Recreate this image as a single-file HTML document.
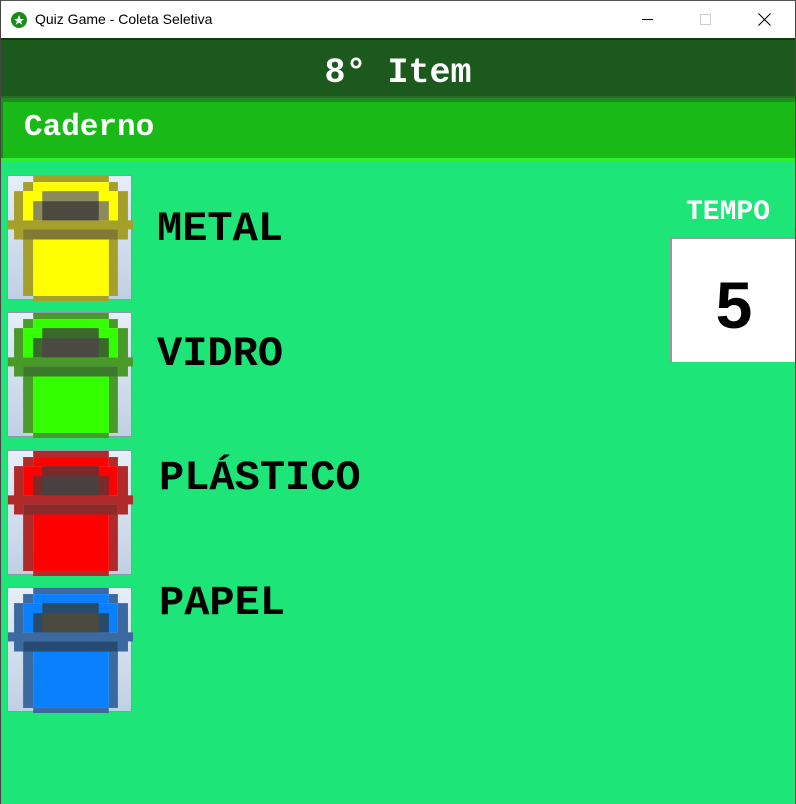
<!DOCTYPE html>
<html><head><meta charset="utf-8"><style>
*{margin:0;padding:0;box-sizing:border-box}
body{width:796px;height:804px;overflow:hidden;background:#1ee577;position:relative;font-family:"Liberation Mono","Courier New",monospace}
.tb{position:absolute;left:0;top:0;width:796px;height:38px;background:#fff;border-top:1px solid #555;}
.tb .t{position:absolute;left:35px;top:10px;font:14px "Liberation Sans",sans-serif;color:#000}
.frame{position:absolute;left:0;top:0;width:1px;height:804px;background:#444}
.frame2{position:absolute;right:0;top:0;width:1px;height:804px;background:#444}
.hd{position:absolute;left:1px;top:38px;width:794px;height:60px;background:#1c591d;border-top:2px solid #0f3a10;border-bottom:2px solid #2a6a2a}
.hd span{position:absolute;left:0;right:0;top:13px;text-align:center;color:#fff;font-weight:bold;font-size:35px;line-height:40px}
.band{position:absolute;left:1px;top:98px;width:794px;height:4px;background:#1f8a1f}
.cd{position:absolute;left:1px;top:102px;width:794px;height:58px;background:#19b918;border-left:2px solid #139013}
.cd span{position:absolute;left:21px;top:8px;color:#fff;font-weight:bold;font-size:31px;line-height:36px}
.line{position:absolute;left:1px;top:158px;width:794px;height:3px;background:#2ef02a}
.btn{position:absolute;left:7px;width:125px;height:125px;border:1px solid #8a9aa8;background:linear-gradient(#e6eef8,#c0d0e4)}
.btn svg{position:absolute;left:0;top:0}
.lbl{position:absolute;color:#000;font-weight:bold;font-size:42px;line-height:46px}
.tempo{position:absolute;left:686px;top:197px;color:#fff;font-weight:bold;font-size:28px;line-height:32px}
.box{position:absolute;left:670px;top:237px;width:126px;height:125px;background:#fff;border-left:2px solid #999;border-top:2px solid #999}
.box span{position:absolute;left:0;right:0;top:31px;text-align:center;font:bold 66px "Liberation Sans",sans-serif;color:#000;line-height:70px}
</style></head><body>
<div class="tb">
<svg style="position:absolute;left:10px;top:10px" width="18" height="18" viewBox="0 0 18 18"><circle cx="9" cy="9" r="8" fill="#1a8a1a"/><path d="M9 4 L10.5 8 L14 8 L11 10.5 L12.5 14 L9 11.5 L5.5 14 L7 10.5 L4 8 L7.5 8Z" fill="#fff"/></svg>
<span class="t">Quiz Game - Coleta Seletiva</span>
<div style="position:absolute;left:642px;top:18px;width:11px;height:1px;background:#000"></div>
<div style="position:absolute;left:700px;top:13px;width:11px;height:11px;border:1px solid #ccc"></div>
<svg style="position:absolute;left:758px;top:12px" width="13" height="13"><path d="M0.5 0.5L12.5 12.5M12.5 0.5L0.5 12.5" stroke="#000" stroke-width="1.1"/></svg>
</div>
<div class="hd"><span>8° Item</span></div>
<div class="band"></div>
<div class="cd"><span>Caderno</span></div>
<div class="line"></div>

<div class="btn" style="top:175px"><svg width="125" height="125" viewBox="0 0 124 124">
<g fill="#a5a02a"><rect x="25" y="0" width="75" height="6"/><rect x="15" y="6" width="10" height="9"/><rect x="100" y="6" width="9" height="9"/><rect x="6" y="15" width="9" height="48"/><rect x="109" y="15" width="10" height="48"/><rect x="0" y="44" width="124" height="9"/><rect x="15" y="63" width="10" height="56"/><rect x="100" y="63" width="9" height="56"/><rect x="25" y="119" width="75" height="5"/></g>
<g fill="#ffff00"><rect x="25" y="6" width="75" height="9"/><rect x="15" y="15" width="94" height="29"/><rect x="25" y="63" width="75" height="56"/></g>
<rect x="34" y="15" width="56" height="10" fill="#8a8a5a"/><rect x="25" y="25" width="75" height="19" fill="#8a8a5a"/><rect x="34" y="25" width="56" height="19" fill="#4a4a40"/><rect x="15" y="53" width="94" height="10" fill="#807a35"/>
</svg></div>
<div class="lbl" style="left:157px;top:206px">METAL</div>

<div class="btn" style="top:312px"><svg width="125" height="125" viewBox="0 0 124 124">
<g fill="#4a9a2a"><rect x="25" y="0" width="75" height="6"/><rect x="15" y="6" width="10" height="9"/><rect x="100" y="6" width="9" height="9"/><rect x="6" y="15" width="9" height="48"/><rect x="109" y="15" width="10" height="48"/><rect x="0" y="44" width="124" height="9"/><rect x="15" y="63" width="10" height="56"/><rect x="100" y="63" width="9" height="56"/><rect x="25" y="119" width="75" height="5"/></g>
<g fill="#33ff00"><rect x="25" y="6" width="75" height="9"/><rect x="15" y="15" width="94" height="29"/><rect x="25" y="63" width="75" height="56"/></g>
<rect x="34" y="15" width="56" height="10" fill="#3a6a2a"/><rect x="25" y="25" width="75" height="19" fill="#3a6a2a"/><rect x="34" y="25" width="56" height="19" fill="#4a4a40"/><rect x="15" y="53" width="94" height="10" fill="#3a7a2a"/>
</svg></div>
<div class="lbl" style="left:157px;top:331px">VIDRO</div>

<div class="btn" style="top:450px"><svg width="125" height="125" viewBox="0 0 124 124">
<g fill="#b02a2a"><rect x="25" y="0" width="75" height="6"/><rect x="15" y="6" width="10" height="9"/><rect x="100" y="6" width="9" height="9"/><rect x="6" y="15" width="9" height="48"/><rect x="109" y="15" width="10" height="48"/><rect x="0" y="44" width="124" height="9"/><rect x="15" y="63" width="10" height="56"/><rect x="100" y="63" width="9" height="56"/><rect x="25" y="119" width="75" height="5"/></g>
<g fill="#ff0000"><rect x="25" y="6" width="75" height="9"/><rect x="15" y="15" width="94" height="29"/><rect x="25" y="63" width="75" height="56"/></g>
<rect x="34" y="15" width="56" height="10" fill="#7a2a2a"/><rect x="25" y="25" width="75" height="19" fill="#7a2a2a"/><rect x="34" y="25" width="56" height="19" fill="#4a4040"/><rect x="15" y="53" width="94" height="10" fill="#8a2a2a"/>
</svg></div>
<div class="lbl" style="left:159px;top:455px">PLÁSTICO</div>

<div class="btn" style="top:587px"><svg width="125" height="125" viewBox="0 0 124 124">
<g fill="#3a6aa0"><rect x="25" y="0" width="75" height="6"/><rect x="15" y="6" width="10" height="9"/><rect x="100" y="6" width="9" height="9"/><rect x="6" y="15" width="9" height="48"/><rect x="109" y="15" width="10" height="48"/><rect x="0" y="44" width="124" height="9"/><rect x="15" y="63" width="10" height="56"/><rect x="100" y="63" width="9" height="56"/><rect x="25" y="119" width="75" height="5"/></g>
<g fill="#0a80ff"><rect x="25" y="6" width="75" height="9"/><rect x="15" y="15" width="94" height="29"/><rect x="25" y="63" width="75" height="56"/></g>
<rect x="34" y="15" width="56" height="10" fill="#2a4a6a"/><rect x="25" y="25" width="75" height="19" fill="#2a4a6a"/><rect x="34" y="25" width="56" height="19" fill="#4a4a40"/><rect x="15" y="53" width="94" height="10" fill="#264a70"/>
</svg></div>
<div class="lbl" style="left:159px;top:580px">PAPEL</div>

<div class="tempo">TEMPO</div>
<div class="box"><span>5</span></div>
<div class="frame"></div><div class="frame2"></div>
</body></html>
